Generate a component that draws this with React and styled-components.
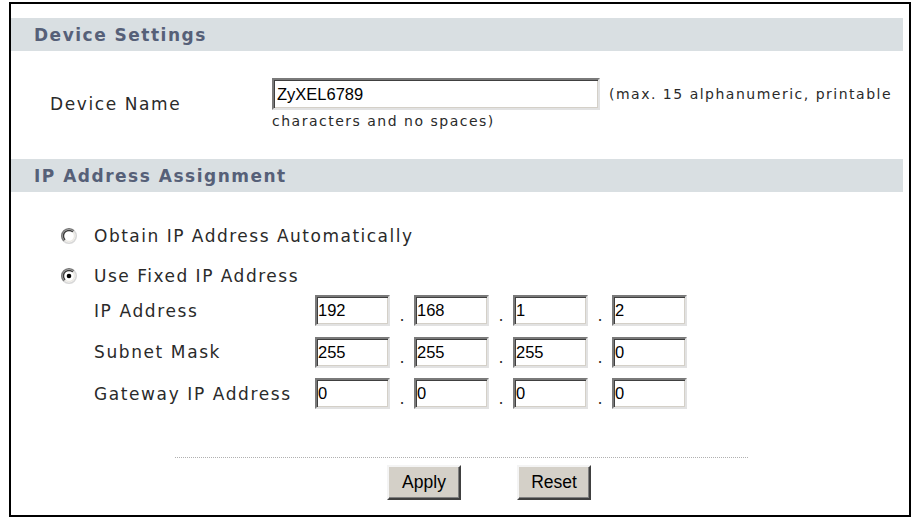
import React from 'react'
import styled, { createGlobalStyle } from 'styled-components'

const GlobalStyle = createGlobalStyle`
  html, body {
    margin: 0;
    padding: 0;
    background: #fff;
  }
  body {
    font-family: "DejaVu Sans", Verdana, sans-serif;
    color: #2a2a2a;
  }
`

const Frame = styled.div`
  box-sizing: border-box;
  width: 902px;
  height: 515px;
  margin: 2px 0 0 9px;
  border: 2px solid #000;
  padding: 14px 6px 0 0;
  background: #fff;
`

const SectionTitle = styled.div`
  height: 33px;
  display: flex;
  align-items: center;
  padding-left: 23px;
  background: #d9dfe2;
  color: #566078;
  font-weight: bold;
  font-size: 17px;
  letter-spacing: 1.5px;
`

const DeviceRow = styled.div`
  display: flex;
  align-items: center;
  margin: 27px 0 29px;
`

const RowLabel = styled.div`
  box-sizing: border-box;
  flex: none;
  width: ${p => p.$width}px;
  padding-left: ${p => p.$indent}px;
  font-size: 17px;
  letter-spacing: 1.6px;
  color: #2a2a2a;
  white-space: nowrap;
`

const ValueCell = styled.div`
  display: flex;
  flex-direction: column;
`

const InlineLine = styled.div`
  display: flex;
  align-items: center;
  gap: 9px;
`

const Note = styled.span`
  font-size: 14px;
  letter-spacing: 1.5px;
  line-height: 18px;
  color: #2a2a2a;
  white-space: nowrap;
  margin-top: ${p => p.$top || 0}px;
`

const TextBox = styled.input`
  box-sizing: border-box;
  width: ${p => p.$w}px;
  height: ${p => p.$h}px;
  margin: 0;
  padding: 0 0 0 ${p => p.$pad}px;
  border: 2px solid;
  border-color: #7a7a7a #e2e2e2 #e2e2e2 #7a7a7a;
  box-shadow: inset 1px 1px 0 #404040, inset -1px -1px 0 #d4d0c8;
  background: #fff;
  color: #000;
  font-family: "Liberation Sans", Arial, sans-serif;
  font-size: 16.5px;
  outline: none;
`

const SectionBody = styled.div`
  padding-top: 24px;
`

const RadioRow = styled.label`
  box-sizing: border-box;
  display: flex;
  align-items: center;
  gap: 17px;
  height: ${p => p.$h}px;
  padding: ${p => p.$top || 0}px 0 0 50px;
  font-size: 17px;
  letter-spacing: 1.5px;
  color: #2a2a2a;
  white-space: nowrap;
`

const IpRow = styled.div`
  display: flex;
  align-items: center;
  height: 41.5px;
  padding-left: 83px;
`

const Octets = styled.div`
  display: flex;
  height: 31px;
`

const Dot = styled.span`
  width: 24px;
  display: flex;
  align-items: flex-end;
  justify-content: center;
  padding-bottom: 2px;
  font-size: 16px;
  line-height: 1;
  color: #2a2a2a;
`

const Divider = styled.div`
  width: 573px;
  margin: 42px 0 0 164px;
  border-top: 1px dotted #b0b0b0;
`

const ButtonBar = styled.div`
  display: flex;
  gap: 56px;
  padding-left: 376px;
  margin-top: 7px;
`

const Button = styled.button`
  box-sizing: border-box;
  width: 74px;
  height: 35px;
  margin: 0;
  padding: 0;
  background: #d4d0c8;
  border: 2px solid;
  border-color: #f4f4f4 #404040 #404040 #f4f4f4;
  box-shadow: inset -1px -1px 0 #808080;
  color: #000;
  font-family: "Liberation Sans", Arial, sans-serif;
  font-size: 17.5px;
`

const Radio = ({ checked }) => (
  <svg width="16" height="16" viewBox="0 0 16 16">
    <circle cx="8" cy="8" r="7.2" fill="#fff" />
    <path d="M2.9 13.1A7.2 7.2 0 0 1 13.1 2.9" stroke="#7a7a7a" strokeWidth="1.6" fill="none" />
    <path d="M13.1 2.9A7.2 7.2 0 0 1 2.9 13.1" stroke="#d8d8d8" strokeWidth="1.6" fill="none" />
    <path d="M4.1 11.9A5.5 5.5 0 0 1 11.9 4.1" stroke="#3a3a3a" strokeWidth="1.4" fill="none" />
    <path d="M11.9 4.1A5.5 5.5 0 0 1 4.1 11.9" stroke="#ebe9e4" strokeWidth="1.4" fill="none" />
    {checked && <circle cx="8" cy="8" r="2.3" fill="#000" />}
  </svg>
)

const ipRows = [
  { label: 'IP Address', parts: ['192', '168', '1', '2'] },
  { label: 'Subnet Mask', parts: ['255', '255', '255', '0'] },
  { label: 'Gateway IP Address', parts: ['0', '0', '0', '0'] },
]

export default function App() {
  return (
    <>
      <GlobalStyle />
      <Frame>
        <SectionTitle>Device Settings</SectionTitle>
        <DeviceRow>
          <RowLabel $width={261} $indent={39}>Device Name</RowLabel>
          <ValueCell>
            <InlineLine>
              <TextBox $w={328} $h={32} $pad={3} value="ZyXEL6789" readOnly />
              <Note>(max. 15 alphanumeric, printable</Note>
            </InlineLine>
            <Note $top={2}>characters and no spaces)</Note>
          </ValueCell>
        </DeviceRow>

        <SectionTitle>IP Address Assignment</SectionTitle>
        <SectionBody>
          <RadioRow $h={40}>
            <Radio />
            Obtain IP Address Automatically
          </RadioRow>
          <RadioRow $h={34} $top={6}>
            <Radio checked />
            Use Fixed IP Address
          </RadioRow>
          {ipRows.map(row => (
            <IpRow key={row.label}>
              <RowLabel $width={221} $indent={0}>{row.label}</RowLabel>
              <Octets>
                {row.parts.map((part, i) => (
                  <React.Fragment key={i}>
                    {i > 0 && <Dot>.</Dot>}
                    <TextBox $w={75} $h={31} $pad={1} value={part} readOnly />
                  </React.Fragment>
                ))}
              </Octets>
            </IpRow>
          ))}
          <Divider />
          <ButtonBar>
            <Button>Apply</Button>
            <Button>Reset</Button>
          </ButtonBar>
        </SectionBody>
      </Frame>
    </>
  )
}
